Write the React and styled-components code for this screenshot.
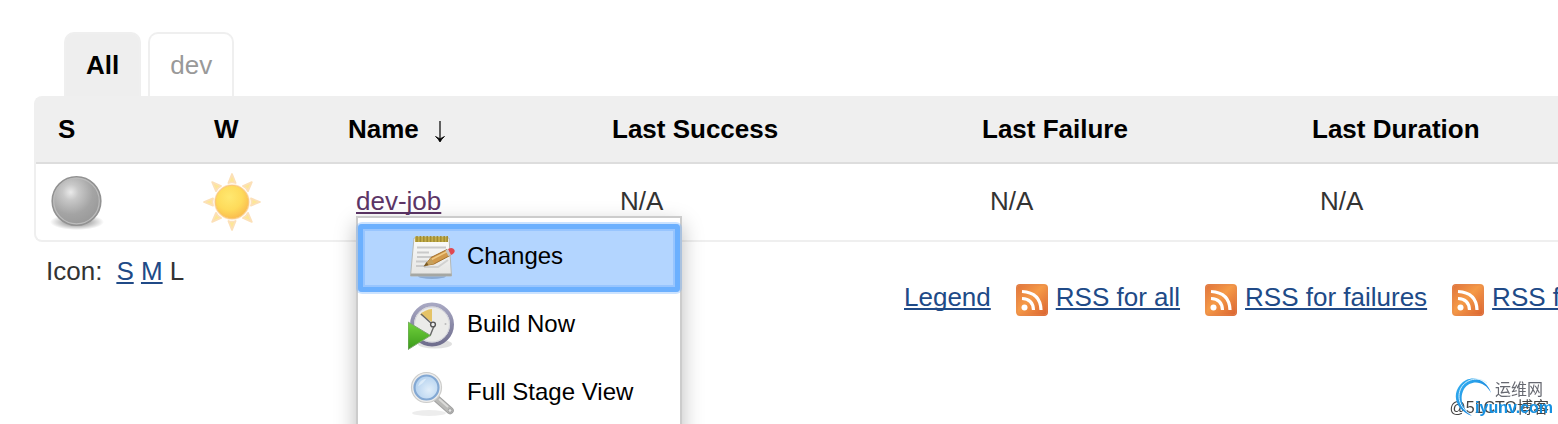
import React from 'react';
import styled, { createGlobalStyle } from 'styled-components';

const GlobalStyle = createGlobalStyle`
  html, body {
    margin: 0;
    height: 100%;
    overflow: hidden;
    background: #fff;
  }
  body {
    font-family: "Liberation Sans", Helvetica, Arial, "Noto Sans CJK SC", sans-serif;
    font-size: 26px;
    line-height: 30px;
    color: #333;
  }
`;

const Page = styled.main`
  padding: 32px 0 0 34px;
`;

const TabBar = styled.nav`
  display: flex;
  gap: 7px;
  padding-left: 30px;
`;

const Tab = styled.a`
  padding: 16px 20px;
  border: 2px solid #efefef;
  border-bottom: none;
  border-radius: 10px 10px 0 0;
  background: ${(p) => (p.$active ? '#eee' : '#fff')};
  color: ${(p) => (p.$active ? '#000' : '#999')};
  font-weight: ${(p) => (p.$active ? 'bold' : 'normal')};
  text-align: center;
  text-decoration: none;
`;

const TableFrame = styled.div`
  border: 2px solid #efefef;
  border-right: none;
  border-radius: 8px 0 0 8px;
`;

const Table = styled.table`
  width: 100%;
  table-layout: fixed;
  border-collapse: separate;
  border-spacing: 0;
`;

const Col = styled.col`
  width: ${(p) => p.$width};
`;

const HeadCell = styled.th`
  padding: 16px 0 18px ${(p) => (p.$icon ? 22 : 8)}px;
  border-bottom: 2px solid #ddd;
  background: #efefef;
  color: #000;
  text-align: left;
  white-space: nowrap;
`;

const SortArrow = styled.svg`
  margin-left: 15px;
  vertical-align: -5px;
`;

const IconCell = styled.td`
  padding: 6px 8px;
  line-height: 0;
`;

const Cell = styled.td`
  padding: 0 0 2px 16px;
  white-space: nowrap;
`;

const JobAnchor = styled.div`
  position: relative;
  display: inline-block;
  vertical-align: top;
`;

const Link = styled.a`
  color: ${(p) => (p.$visited ? '#5c3566' : '#204a87')};
  text-decoration: underline;
  text-decoration-thickness: 2px;
  text-underline-offset: 2px;
  text-decoration-skip-ink: none;
`;

const Menu = styled.div`
  position: absolute;
  top: 100%;
  left: 0;
  z-index: 2;
  width: 322px;
  padding: 6px 0 40px;
  border: 2px solid #ccc;
  background: #fff;
  box-shadow: 0 8px 20px rgba(0, 0, 0, 0.27);
`;

const MenuItem = styled.a`
  display: flex;
  align-items: center;
  gap: 11px;
  padding: 10px 0 10px 50px;
  color: #000;
  font-size: 24px;
  line-height: 28px;
  text-decoration: none;
  ${(p) =>
    p.$selected &&
    `
    border-radius: 4px;
    background: #b3d5ff;
    box-shadow: 0 0 0 2px rgba(108, 176, 254, 0.35), inset 0 0 0 5px #6cb0fe, inset 0 0 0 7px #98c5fe;
  `}
`;

const MenuLabel = styled.span`
  padding-bottom: 4px;
`;

const Footer = styled.div`
  display: grid;
  grid-template-columns: 870px 1fr;
  padding-top: 14px;
  white-space: nowrap;
`;

const IconSizes = styled.div`
  padding-left: 12px;
`;

const SizeList = styled.span`
  margin-left: 14px;
`;

const Feeds = styled.div`
  display: flex;
  gap: 25px;
  padding-top: 26px;
`;

const Feed = styled.div`
  display: flex;
  gap: 8px;
`;

const FeedIcon = styled.svg`
  flex: none;
  margin-top: 2px;
`;

const Watermark = styled.div`
  position: fixed;
  right: 5px;
  bottom: 4px;
  z-index: 3;
  width: 99px;
  height: 44px;
`;

const WatermarkSwirl = styled.svg`
  position: absolute;
  left: 0;
  top: 0;
`;

const SiteName = styled.span`
  position: absolute;
  top: 4px;
  right: 10px;
  color: #666870;
  font-size: 16px;
  line-height: 20px;
  white-space: nowrap;
`;

const BlogCredit = styled.span`
  position: absolute;
  right: 4px;
  bottom: 2px;
  color: #444;
  font-size: 16px;
  line-height: 20px;
  white-space: nowrap;
`;

const SiteDomain = styled.span`
  position: absolute;
  right: 0;
  bottom: 2px;
  color: #1690e0;
  font-size: 16px;
  font-weight: bold;
  line-height: 20px;
`;

const GreyBall = () => (
  <svg width="64" height="64" viewBox="0 0 64 64" role="img" aria-label="Not built">
    <defs>
      <radialGradient id="ball" cx="0.38" cy="0.32" r="0.65">
        <stop offset="0" stopColor="#eaeaea" />
        <stop offset="0.25" stopColor="#c8c8c8" />
        <stop offset="0.7" stopColor="#a4a4a4" />
        <stop offset="1" stopColor="#9b9b9b" />
      </radialGradient>
      <radialGradient id="ballShadow">
        <stop offset="0.5" stopColor="#000" stopOpacity="0.28" />
        <stop offset="1" stopColor="#000" stopOpacity="0" />
      </radialGradient>
    </defs>
    <ellipse cx="33" cy="52" rx="27" ry="8" fill="url(#ballShadow)" />
    <circle cx="32.5" cy="31" r="24.3" fill="url(#ball)" stroke="#929292" strokeWidth="1.6" />
    <circle cx="32.5" cy="31" r="22.8" fill="none" stroke="#bcbcbc" strokeWidth="1.2" />
  </svg>
);

const Sun = () => (
  <svg width="64" height="64" viewBox="0 0 64 64" role="img" aria-label="Sunny">
    <defs>
      <radialGradient id="sun" cx="0.42" cy="0.35" r="0.7">
        <stop offset="0" stopColor="#ffe870" />
        <stop offset="0.55" stopColor="#fedb5b" />
        <stop offset="1" stopColor="#f9b84c" />
      </radialGradient>
    </defs>
    {[0, 45, 90, 135, 180, 225, 270, 315].map((angle) => (
      <path
        key={angle}
        d="M32 4 L35.6 13 Q32 11.8 28.4 13 Z"
        transform={`rotate(${angle} 32 32)`}
        fill="#fde795"
        stroke="#fce0b8"
        strokeWidth="1.8"
        strokeLinejoin="round"
      />
    ))}
    <circle cx="32" cy="32" r="17" fill="#fff" stroke="#fde3bd" strokeWidth="1.6" />
    <circle cx="32" cy="32" r="16.6" fill="url(#sun)" stroke="#fbc878" strokeWidth="1" />
  </svg>
);

const Notepad = () => (
  <svg width="48" height="48" viewBox="0 0 48 48" aria-hidden="true">
    <defs>
      <linearGradient id="paper" x1="0" y1="0" x2="0" y2="1">
        <stop offset="0" stopColor="#fbfbfa" />
        <stop offset="1" stopColor="#e4e4e2" />
      </linearGradient>
    </defs>
    <ellipse cx="24" cy="42" rx="14" ry="3" fill="#6f8fb8" opacity="0.6" />
    <path d="M6 4 H41 L43.5 42 H2.5 Z" fill="url(#paper)" stroke="#b5b8b4" />
    <path d="M3 39.5 H43.4 L43.5 42 H2.5 Z" fill="#a5a7a3" />
    <rect x="7" y="2.5" width="33" height="5.5" fill="#c3ad48" />
    <path
      d="M9 2 V8 M12.4 2 V8 M15.8 2 V8 M19.2 2 V8 M22.6 2 V8 M26 2 V8 M29.4 2 V8 M32.8 2 V8 M36.2 2 V8 M39.2 2 V8"
      stroke="#a08c34"
      strokeWidth="1.5"
    />
    <path d="M9 13.5 H38 M9 18.5 H21 M9 23 H31 M8 27.5 H24 M8 32 H18" stroke="#cacaca" strokeWidth="1.8" />
    <path d="M16 33 H30 L40 26" fill="none" stroke="#aaa" strokeWidth="2" opacity="0.4" />
    <path d="M17 31.5 L23 23.5 L39 15.5 L42 21.5 L26 30 Z" fill="#d29a4c" stroke="#a3702e" strokeWidth="1" />
    <path d="M23.5 25.5 L40 17" stroke="#f0c983" strokeWidth="1.5" />
    <path d="M17 31.5 L23 23.5 L26 30 Z" fill="#c5a05c" />
    <path d="M15.5 32.5 L18.5 28 L20.5 31 Z" fill="#7b5b25" />
    <path d="M37.5 16.3 L40 15 L43 21 L40.5 22.3 Z" fill="#c7c7c7" />
    <path d="M40 15 Q44.5 12.5 46.5 16 Q47.5 19 43 21 Z" fill="#e04850" />
  </svg>
);

const BuildClock = () => (
  <svg width="48" height="48" viewBox="0 0 48 48" aria-hidden="true">
    <defs>
      <linearGradient id="play" x1="0" y1="0" x2="0" y2="1">
        <stop offset="0" stopColor="#72d23c" />
        <stop offset="1" stopColor="#3b9b1b" />
      </linearGradient>
      <linearGradient id="clockRim" x1="0" y1="0" x2="0" y2="1">
        <stop offset="0" stopColor="#a7a7c2" />
        <stop offset="1" stopColor="#706e8e" />
      </linearGradient>
    </defs>
    <ellipse cx="27" cy="42" rx="17" ry="4.5" fill="#000" opacity="0.12" />
    <circle cx="24" cy="22.5" r="20" fill="#ebebe9" stroke="url(#clockRim)" strokeWidth="4" />
    <circle cx="24" cy="22.5" r="17.5" fill="none" stroke="#d2d2da" strokeWidth="1" />
    <path d="M24 20 L12 12.5 Q17 7.5 24 7 Z" fill="#e5c366" />
    <path d="M13 12 L24 22 M26 24 L22 34" stroke="#666" strokeWidth="1.4" />
    <circle cx="25" cy="22.5" r="2.4" fill="#eee" stroke="#555" strokeWidth="1.4" />
    <circle cx="37.5" cy="22" r="1" fill="#bbb" />
    <path d="M0 20 L22.5 33.5 L0 47.5 Z" fill="url(#play)" stroke="#7ba56c" strokeWidth="1" />
  </svg>
);

const Magnifier = () => (
  <svg width="48" height="48" viewBox="0 0 48 48" aria-hidden="true">
    <defs>
      <radialGradient id="lens" cx="0.6" cy="0.6" r="0.65">
        <stop offset="0" stopColor="#e1eefa" />
        <stop offset="1" stopColor="#b0cfee" />
      </radialGradient>
    </defs>
    <ellipse cx="21" cy="43" rx="17" ry="3" fill="#000" opacity="0.07" />
    <path d="M29 29 L42 40.5" stroke="#a0a0a0" strokeWidth="7.5" strokeLinecap="round" />
    <path d="M29 29 L42 40.5" stroke="#b9b9b7" strokeWidth="5.5" strokeLinecap="round" />
    <path d="M31 29 L40 37" stroke="#dadad8" strokeWidth="2" />
    <circle cx="42" cy="40.5" r="1.8" fill="#e4e4e4" stroke="#999" strokeWidth="0.8" />
    <circle cx="18.5" cy="17.5" r="15" fill="#ececec" stroke="#cdcdcb" strokeWidth="1.2" />
    <circle cx="18.5" cy="17.5" r="12" fill="url(#lens)" stroke="#83a8d3" strokeWidth="2.2" />
    <path d="M10 16.5 Q11.5 9.5 18.5 8.5 Q15.5 13.5 10 16.5 Z" fill="#eef6fd" opacity="0.6" />
  </svg>
);

const RssIcon = () => (
  <FeedIcon width="32" height="32" viewBox="0 0 32 32" aria-hidden="true">
    <defs>
      <linearGradient id="rss" x1="0" y1="0" x2="1" y2="1">
        <stop offset="0" stopColor="#df7139" />
        <stop offset="0.45" stopColor="#f59a47" />
        <stop offset="1" stopColor="#d9602f" />
      </linearGradient>
    </defs>
    <rect width="32" height="32" rx="4" fill="url(#rss)" />
    <rect x="1" y="1" width="30" height="30" rx="3" fill="none" stroke="#e28a55" strokeOpacity="0.6" />
    <circle cx="8.5" cy="23.5" r="3" fill="#fff" />
    <path d="M6 14.5 Q17 15 17.5 26 M6 7.5 Q24.5 8.5 25 26" fill="none" stroke="#fff" strokeWidth="3.2" />
  </FeedIcon>
);

const columns = [
  { label: 'S', width: '156px', icon: true },
  { label: 'W', width: '148px', icon: true },
  { label: 'Name', width: '264px', sorted: true },
  { label: 'Last Success', width: '370px' },
  { label: 'Last Failure', width: '330px' },
  { label: 'Last Duration', width: 'auto' },
];

const menuItems = [
  { label: 'Changes', Icon: Notepad, selected: true },
  { label: 'Build Now', Icon: BuildClock },
  { label: 'Full Stage View', Icon: Magnifier },
];

const feeds = ['RSS for all', 'RSS for failures', 'RSS for just latest builds'];

const JobTable = () => (
  <TableFrame>
    <Table>
      <colgroup>
        {columns.map((c) => (
          <Col key={c.label} $width={c.width} />
        ))}
      </colgroup>
      <thead>
        <tr>
          {columns.map((c) => (
            <HeadCell key={c.label} $icon={c.icon} scope="col">
              {c.label}
              {c.sorted && (
                <SortArrow width="12" height="24" viewBox="0 0 12 24" aria-hidden="true">
                  <path d="M6 2 V21" stroke="#000" strokeWidth="1.2" />
                  <path d="M1.5 17.5 Q4 18.5 6 20 Q8 18.5 10.5 17.5 Q7.5 20 6 23 Q4.5 20 1.5 17.5 Z" fill="#000" stroke="#000" strokeWidth="0.8" />
                </SortArrow>
              )}
            </HeadCell>
          ))}
        </tr>
      </thead>
      <tbody>
        <tr>
          <IconCell>
            <GreyBall />
          </IconCell>
          <IconCell>
            <Sun />
          </IconCell>
          <Cell>
            <JobAnchor>
              <Link href="#dev-job" $visited>dev-job</Link>
              <Menu>
                {menuItems.map(({ label, Icon, selected }) => (
                  <MenuItem key={label} href="#menu" $selected={selected}>
                    <Icon />
                    <MenuLabel>{label}</MenuLabel>
                  </MenuItem>
                ))}
              </Menu>
            </JobAnchor>
          </Cell>
          <Cell>N/A</Cell>
          <Cell>N/A</Cell>
          <Cell>N/A</Cell>
        </tr>
      </tbody>
    </Table>
  </TableFrame>
);

const App = () => (
  <>
    <GlobalStyle />
    <Page>
      <TabBar>
        <Tab href="#all" $active>All</Tab>
        <Tab href="#dev">dev</Tab>
      </TabBar>
      <JobTable />
      <Footer>
        <IconSizes>
          Icon:
          <SizeList>
            <Link href="#small">S</Link> <Link href="#medium">M</Link> L
          </SizeList>
        </IconSizes>
        <Feeds>
          <Link href="#legend">Legend</Link>
          {feeds.map((name) => (
            <Feed key={name}>
              <RssIcon />
              <Link href="#rss">{name}</Link>
            </Feed>
          ))}
        </Feeds>
      </Footer>
    </Page>
    <Watermark>
      <BlogCredit>@51CTO博客</BlogCredit>
      <WatermarkSwirl width="42" height="42" viewBox="0 0 42 42" aria-hidden="true">
        <defs>
          <linearGradient id="swirl" x1="0" y1="0" x2="1" y2="1">
            <stop offset="0" stopColor="#35b4f4" />
            <stop offset="1" stopColor="#0b6fd0" />
          </linearGradient>
        </defs>
        <path d="M37 17 C33 3 16 -3 6 9 C-3 20 3 35 18 40 C8 33 5 22 10 13 C17 3 31 5 37 17 Z" fill="url(#swirl)" />
        <path d="M33 7 C24 0 12 3 7 12 C2 22 7 33 16 38" fill="none" stroke="#d4effd" strokeWidth="1" />
      </WatermarkSwirl>
      <SiteName>运维网</SiteName>
      <SiteDomain>iyunv.com</SiteDomain>
    </Watermark>
  </>
);

export default App;
